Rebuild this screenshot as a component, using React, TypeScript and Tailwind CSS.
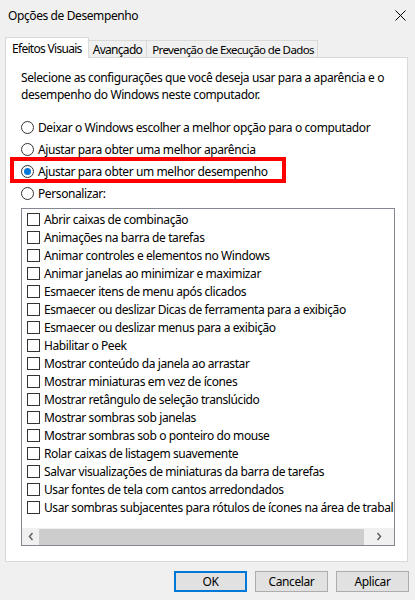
import React from 'react';

const items = [
  'Abrir caixas de combinação',
  'Animações na barra de tarefas',
  'Animar controles e elementos no Windows',
  'Animar janelas ao minimizar e maximizar',
  'Esmaecer itens de menu após clicados',
  'Esmaecer ou deslizar Dicas de ferramenta para a exibição',
  'Esmaecer ou deslizar menus para a exibição',
  'Habilitar o Peek',
  'Mostrar conteúdo da janela ao arrastar',
  'Mostrar miniaturas em vez de ícones',
  'Mostrar retângulo de seleção translúcido',
  'Mostrar sombras sob janelas',
  'Mostrar sombras sob o ponteiro do mouse',
  'Rolar caixas de listagem suavemente',
  'Salvar visualizações de miniaturas da barra de tarefas',
  'Usar fontes de tela com cantos arredondados',
  'Usar sombras subjacentes para rótulos de ícones na área de trabalho',
];

const Radio: React.FC<{ label: string; checked?: boolean }> = ({ label, checked }) => (
  <div className="flex items-center h-[22px]">
    <span className="w-[13px] h-[13px] rounded-full border border-[#333] bg-white flex items-center justify-center shrink-0">
      {checked && <span className="w-[7px] h-[7px] rounded-full bg-[#0078d7]" />}
    </span>
    <span className="ml-[4px] whitespace-nowrap">{label}</span>
  </div>
);

const Button: React.FC<{ label: string; primary?: boolean }> = ({ label, primary }) => (
  <div
    className={
      primary
        ? 'w-[73px] h-[21px] border-2 border-[#0078d7] bg-[#e1e1e1] flex items-center justify-center'
        : 'w-[73px] h-[21px] border border-[#adadad] bg-[#e1e1e1] flex items-center justify-center'
    }
  >
    {label}
  </div>
);

export default function App() {
  return (
    <div
      className="w-[415px] h-[600px] bg-[#f0f0f0] text-black text-[12px] leading-[17px] tracking-[-0.4px] overflow-hidden"
      style={{ fontFamily: '"Noto Sans", "Open Sans", sans-serif' }}
    >
      {/* title bar */}
      <div className="h-[30px] flex items-center justify-between pl-[8px] pr-[9px]">
        <span>Opções de Desempenho</span>
        <svg width="11" height="11" viewBox="0 0 11 11">
          <path d="M0.5 0.5 L10.5 10.5 M10.5 0.5 L0.5 10.5" stroke="#000" strokeWidth="1" />
        </svg>
      </div>

      {/* tabs */}
      <div className="mt-[7px] px-[5px] flex items-end relative z-10 -mb-px tracking-[-0.7px]">
        <div className="h-[21px] px-[6px] bg-white border border-b-0 border-[#d9d9d9] flex items-center">
          Efeitos Visuais
        </div>
        <div className="h-[18px] px-[4px] bg-[#f0f0f0] border border-l-0 border-[#d9d9d9] flex items-center">
          Avançado
        </div>
        <div className="h-[18px] pl-[5px] pr-[3px] text-[11.5px] tracking-[-0.6px] bg-[#f0f0f0] border border-l-0 border-[#d9d9d9] flex items-center">
          Prevenção de Execução de Dados
        </div>
      </div>

      {/* panel */}
      <div className="mx-[5px] w-[403px] h-[505px] bg-white border border-[#d9d9d9] pl-[15px] pr-[12px] pt-[11px] pb-[15px] flex flex-col">
        <p>
          Selecione as configurações que você deseja usar para a aparência e o desempenho do Windows neste computador.
        </p>

        <div className="mt-[13px] flex flex-col">
          <Radio label="Deixar o Windows escolher a melhor opção para o computador" />
          <Radio label="Ajustar para obter uma melhor aparência" />
          <div className="relative">
            <div className="absolute left-[-11px] top-[-3px] w-[276px] h-[26px] border-[4px] border-[#ff0000]" />
            <Radio label="Ajustar para obter um melhor desempenho" checked />
          </div>
          <Radio label="Personalizar:" />
        </div>

        <div className="mt-[4px] flex-1 border border-[#828790] bg-white flex flex-col overflow-hidden">
          <div className="pt-[1px] flex-1">
            {items.map((item) => (
              <div key={item} className="h-[18px] flex items-center pl-[5px] whitespace-nowrap">
                <span className="w-[13px] h-[13px] border border-[#333] bg-white shrink-0" />
                <span className="ml-[4px]">{item}</span>
              </div>
            ))}
          </div>
          <div className="h-[17px] bg-[#f0f0f0] flex items-center">
            <div className="w-[17px] h-[17px] flex items-center justify-center">
              <svg width="6" height="9" viewBox="0 0 6 9">
                <path d="M4.5 1 L1.5 4.5 L4.5 8" stroke="#606060" strokeWidth="1.5" fill="none" />
              </svg>
            </div>
            <div className="w-[325px] h-[16px] bg-[#cdcdcd]" />
            <div className="flex-1 h-[17px] flex items-center justify-center">
              <svg width="6" height="9" viewBox="0 0 6 9">
                <path d="M1.5 1 L4.5 4.5 L1.5 8" stroke="#606060" strokeWidth="1.5" fill="none" />
              </svg>
            </div>
          </div>
        </div>
      </div>

      {/* buttons */}
      <div className="mt-[9px] flex justify-end gap-[8px] pr-[6px]">
        <Button label="OK" primary />
        <Button label="Cancelar" />
        <Button label="Aplicar" />
      </div>
    </div>
  );
}
